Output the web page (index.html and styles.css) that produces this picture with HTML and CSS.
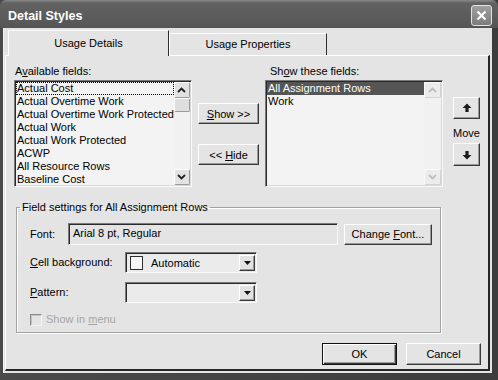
FILE: index.html
```html
<!DOCTYPE html>
<html>
<head>
<meta charset="utf-8">
<title>Detail Styles</title>
<link rel="stylesheet" href="styles.css">
</head>
<body>
<div class="window">
  <div class="titlebar">
    <span class="title">Detail Styles</span>
    <div class="close">
      <svg width="11" height="11" viewBox="0 0 11 11"><path d="M1.5 1.5 L9.5 9.5 M9.5 1.5 L1.5 9.5" stroke="#fff" stroke-width="2.2" fill="none"/></svg>
    </div>
  </div>
  <div class="client">
    <div class="tabs">
      <div class="tab active">Usage Details</div>
      <div class="tab">Usage Properties</div>
    </div>
    <div class="panel">
      <div class="top-row">
        <div class="col-list">
          <div class="label">A<u>v</u>ailable fields:</div>
          <div class="listbox">
            <ul class="items">
              <li class="focus">Actual Cost</li>
              <li>Actual Overtime Work</li>
              <li>Actual Overtime Work Protected</li>
              <li>Actual Work</li>
              <li>Actual Work Protected</li>
              <li>ACWP</li>
              <li>All Resource Rows</li>
              <li>Baseline Cost</li>
            </ul>
            <div class="vscroll">
              <div class="sbtn"><svg width="9" height="6" viewBox="0 0 9 6"><path d="M1 5 L4.5 1.5 L8 5" stroke="#222" stroke-width="1.8" fill="none"/></svg></div>
              <div class="thumb"></div>
              <div class="track"></div>
              <div class="sbtn"><svg width="9" height="6" viewBox="0 0 9 6"><path d="M1 1 L4.5 4.5 L8 1" stroke="#222" stroke-width="1.8" fill="none"/></svg></div>
            </div>
          </div>
        </div>
        <div class="col-mid">
          <div class="btn mid"><span><u>S</u>how &gt;&gt;</span></div>
          <div class="btn mid hide"><span>&lt;&lt; <u>H</u>ide</span></div>
        </div>
        <div class="col-list right">
          <div class="label">Sh<u>o</u>w these fields:</div>
          <div class="listbox">
            <ul class="items">
              <li class="selected">All Assignment Rows</li>
              <li>Work</li>
            </ul>
            <div class="vscroll disabled">
              <div class="sbtn"><svg width="9" height="6" viewBox="0 0 9 6"><path d="M1 5 L4.5 1.5 L8 5" stroke="#bdbdbd" stroke-width="1.8" fill="none"/></svg></div>
              <div class="track"></div>
              <div class="sbtn"><svg width="9" height="6" viewBox="0 0 9 6"><path d="M1 1 L4.5 4.5 L8 1" stroke="#bdbdbd" stroke-width="1.8" fill="none"/></svg></div>
            </div>
          </div>
        </div>
        <div class="col-move">
          <div class="btn move-btn"><svg width="10" height="10" viewBox="0 0 10 10"><path d="M5 0.5 L9.5 5 L6.6 5 L6.6 9 L3.4 9 L3.4 5 L0.5 5 Z" fill="#1c1c1c"/></svg></div>
          <div class="move-label">Move</div>
          <div class="btn move-btn down"><svg width="10" height="10" viewBox="0 0 10 10"><path d="M5 9.5 L9.5 5 L6.6 5 L6.6 1 L3.4 1 L3.4 5 L0.5 5 Z" fill="#1c1c1c"/></svg></div>
        </div>
      </div>
      <fieldset class="group">
        <legend>Field settings for All Assignment Rows</legend>
        <div class="row r1">
          <span class="flabel font-label">Font:</span>
          <div class="textfield">Arial 8 pt, Regular</div>
          <div class="btn change"><span>Change <u>F</u>ont...</span></div>
        </div>
        <div class="row r2">
          <span class="flabel combo-label"><u>C</u>ell background:</span>
          <div class="combo">
            <div class="combo-value"><span class="swatch"></span><span>Automatic</span></div>
            <div class="drop"><svg width="7" height="4" viewBox="0 0 7 4"><path d="M0 0 H7 L3.5 4 Z" fill="#111"/></svg></div>
          </div>
        </div>
        <div class="row r3">
          <span class="flabel combo-label"><u>P</u>attern:</span>
          <div class="combo">
            <div class="combo-value"></div>
            <div class="drop"><svg width="7" height="4" viewBox="0 0 7 4"><path d="M0 0 H7 L3.5 4 Z" fill="#111"/></svg></div>
          </div>
        </div>
        <div class="row r4">
          <span class="checkbox"></span>
          <span class="check-label">Show in <u>m</u>enu</span>
        </div>
      </fieldset>
      <div class="footer">
        <div class="btn footer-btn default"><span>OK</span></div>
        <div class="btn footer-btn"><span>Cancel</span></div>
      </div>
    </div>
  </div>
</div>
</body>
</html>
```

FILE: styles.css
```css
* { box-sizing: border-box; }

body {
  margin: 0;
  background: #3a3a3a;
  font-family: "Liberation Sans", Arial, sans-serif;
  font-size: 11px;
  color: #000;
}

.window {
  width: 498px;
  height: 380px;
  display: flex;
  flex-direction: column;
  background: linear-gradient(90deg, #4a4a4a, #3c3c3c);
  overflow: hidden;
}

.titlebar {
  flex: none;
  height: 28px;
  display: flex;
  align-items: flex-start;
  justify-content: space-between;
  padding: 0 6px 0 8px;
  background: linear-gradient(#8a8a8a 0, #626262 3px, #5a5a5a 20px, #545454 100%);
  border-radius: 6px 6px 0 0;
}

.title {
  color: #fff;
  font-weight: bold;
  font-size: 12.5px;
  line-height: 13px;
  margin-top: 10px;
}

.close {
  width: 21px;
  height: 21px;
  margin-top: 5px;
  border: 1px solid #e2e2e2;
  border-radius: 3px;
  background: linear-gradient(#a0a0a0, #7c7c7c);
  display: flex;
  align-items: center;
  justify-content: center;
}

.client {
  flex: none;
  height: 345px;
  margin: 0 6px 0 3px;
  background: #e4e4e4;
  padding-top: 2px;
  border-left: 1px solid #f2f2f2;
}

.tabs {
  display: flex;
  align-items: flex-end;
  height: 26px;
  padding-left: 4px;
  margin-bottom: -1px;
}

.tab {
  width: 158px;
  height: 22px;
  margin-bottom: 1px;
  border: 1px solid;
  border-bottom: none;
  border-color: #fff #2e2e2e transparent #fff;
  background: #e4e4e4;
  text-align: center;
  line-height: 19px;
  padding-top: 1px;
}

.tab.active {
  width: 161px;
  height: 26px;
  margin-bottom: 0;
  position: relative;
  z-index: 1;
  line-height: 20px;
  padding-top: 2px;
}

.panel {
  width: 485px;
  height: 316px;
  margin-left: 1px;
  border-style: solid;
  border-width: 1px 2px 2px 1px;
  border-color: #fff #262626 #262626 #fff;
  padding: 9px 7px 0 8px;
  background: #e4e4e4;
}

.top-row {
  display: flex;
  height: 123px;
}

.col-list {
  width: 178px;
  display: flex;
  flex-direction: column;
}

.label {
  height: 13px;
  line-height: 13px;
  margin-bottom: 2px;
  padding-left: 1px;
}

.right .label { padding-left: 5px; }

.listbox {
  height: 107px;
  display: flex;
  border: 1px solid;
  border-color: #7a7a7a #fafafa #fafafa #7a7a7a;
  box-shadow: inset 1px 1px 0 #2a2a2a, inset -1px -1px 0 #d8d8d8;
  background: #f3f3f3;
  padding: 1px 1px 1px 1px;
}

.items {
  flex: 1;
  list-style: none;
  margin: 0;
  padding: 0;
}

.items li {
  height: 13px;
  line-height: 13px;
  padding-left: 1px;
  white-space: nowrap;
}

.items li.focus {
  outline: 1px dotted #000;
  outline-offset: -1px;
}

.items li.selected {
  background: #555;
  color: #fff;
}

.vscroll {
  width: 17px;
  display: flex;
  flex-direction: column;
  background: #f1f1f1;
}

.sbtn {
  height: 16px;
  display: flex;
  align-items: center;
  justify-content: center;
  border: 1px solid;
  border-color: #fff #9a9a9a #9a9a9a #fff;
  background: #e2e2e2;
  border-radius: 2px;
}

.thumb {
  height: 14px;
  border: 1px solid;
  border-color: #fff #9a9a9a #9a9a9a #fff;
  background: #dedede;
  border-radius: 2px;
}

.track { flex: 1; }

.vscroll.disabled .sbtn {
  background: #ececec;
  border-color: #fafafa #d4d4d4 #d4d4d4 #fafafa;
}

.btn {
  display: flex;
  align-items: center;
  justify-content: center;
  border: 1px solid;
  border-color: #fff #3a3a3a #3a3a3a #fff;
  box-shadow: inset -1px -1px 0 #9a9a9a;
  background: #e4e4e4;
  white-space: nowrap;
}

.col-mid {
  width: 61px;
  margin-left: 6px;
  padding-top: 38px;
}

.btn.mid { height: 21px; }
.btn.hide { margin-top: 20px; }

.col-list.right { margin-left: 6px; }

.col-move {
  width: 27px;
  margin-left: 10px;
  padding-top: 32px;
}

.move-btn { height: 22px; }
.move-btn.down { height: 23px; margin-top: 3px; }

.move-label {
  height: 13px;
  line-height: 13px;
  margin-top: 8px;
  text-align: center;
}

.group {
  width: 425px;
  margin: 13px 0 0 2px;
  padding: 0 0 6px 13px;
  border: 1px solid #a2a2a2;
  box-shadow: 1px 1px 0 #fff, inset 1px 1px 0 #fff;
  min-width: 0;
}

.group legend {
  padding: 0 2px;
  margin-left: -10px;
  line-height: 13px;
}

.row {
  display: flex;
  align-items: center;
}

.r1 { height: 22px; margin-top: 9px; }
.r2 { height: 21px; margin-top: 7px; }
.r3 { height: 21px; margin-top: 9px; }
.r4 { height: 13px; margin-top: 10px; }

.flabel { line-height: 13px; }
.font-label { width: 38px; }
.combo-label { width: 95px; }

.textfield {
  width: 270px;
  height: 22px;
  border: 1px solid;
  border-color: #7a7a7a #fafafa #fafafa #7a7a7a;
  box-shadow: inset 1px 1px 0 #2a2a2a;
  padding: 3px 0 0 4px;
  line-height: 13px;
  background: #e4e4e4;
}

.btn.change {
  width: 88px;
  height: 21px;
  margin-left: 6px;
}

.combo {
  width: 132px;
  height: 21px;
  display: flex;
  border: 1px solid;
  border-color: #7a7a7a #fafafa #fafafa #7a7a7a;
  box-shadow: inset 1px 1px 0 #2a2a2a;
  background: #ebebeb;
  padding: 2px 1px 1px 2px;
}

.combo-value {
  flex: 1;
  display: flex;
  align-items: center;
  line-height: 13px;
}

.swatch {
  width: 13px;
  height: 14px;
  margin: 0 8px 0 2px;
  border: 1px solid #2e2e2e;
  background: #f6f6f6;
}

.drop {
  width: 16px;
  display: flex;
  align-items: center;
  justify-content: center;
  border: 1px solid;
  border-color: #fff #3a3a3a #3a3a3a #fff;
  box-shadow: inset -1px -1px 0 #9a9a9a;
  background: #e2e2e2;
}

.checkbox {
  width: 12px;
  height: 12px;
  border: 1px solid;
  border-color: #8c8c8c #f4f4f4 #f4f4f4 #8c8c8c;
  box-shadow: inset 1px 1px 0 #c4c4c4;
  background: #e4e4e4;
}

.check-label {
  margin-left: 4px;
  color: #a6a6a6;
  line-height: 13px;
}

.footer {
  display: flex;
  justify-content: flex-end;
  gap: 9px;
  margin-top: 10px;
}

.btn.footer-btn {
  width: 75px;
  height: 22px;
}

.btn.default {
  border: 1px solid #111;
  box-shadow: inset 1px 1px 0 #fff, inset -1px -1px 0 #3a3a3a, inset -2px -2px 0 #9a9a9a;
}
```
